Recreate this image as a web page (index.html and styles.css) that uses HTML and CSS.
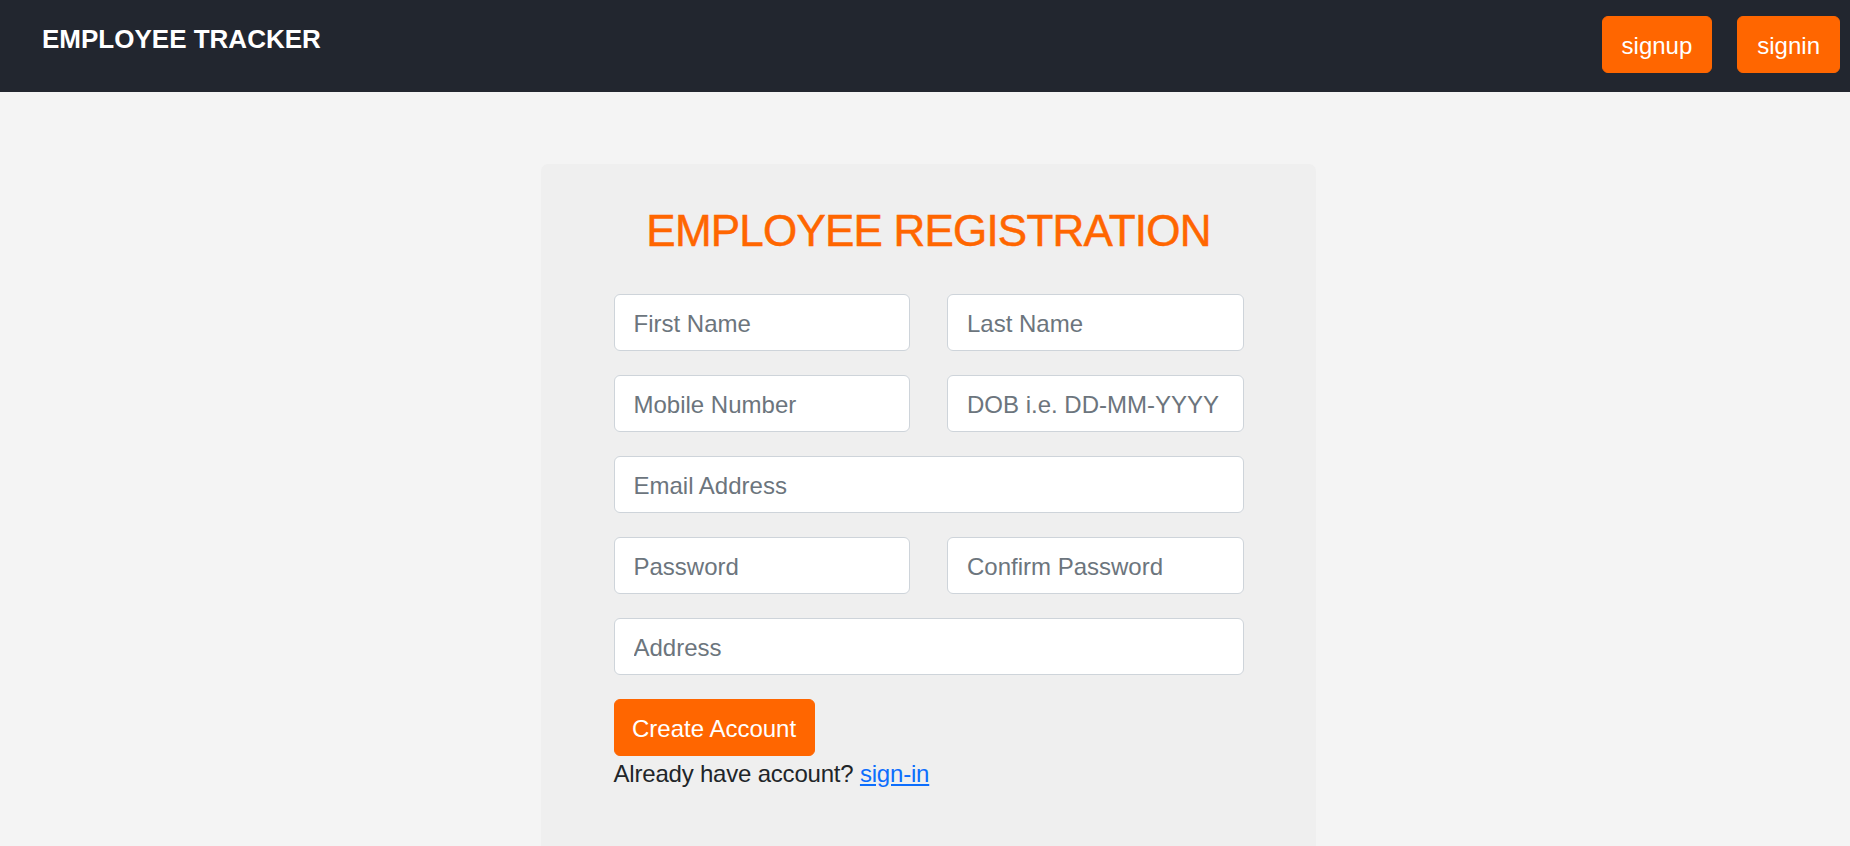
FILE: index.html
```html
<!DOCTYPE html>
<html lang="en">
<head>
<meta charset="utf-8">
<title>Employee Tracker</title>
<link rel="stylesheet" href="styles.css">
</head>
<body>
<nav class="navbar">
  <a class="brand" href="#">EMPLOYEE TRACKER</a>
  <div class="nav-actions">
    <button class="btn" type="button">signup</button>
    <button class="btn" type="button">signin</button>
  </div>
</nav>
<main class="page">
  <section class="card">
    <h1 class="title">EMPLOYEE REGISTRATION</h1>
    <form class="form">
      <input class="field" type="text" placeholder="First Name">
      <input class="field" type="text" placeholder="Last Name">
      <input class="field" type="text" placeholder="Mobile Number">
      <input class="field" type="text" placeholder="DOB i.e. DD-MM-YYYY">
      <input class="field wide" type="email" placeholder="Email Address">
      <input class="field" type="password" placeholder="Password">
      <input class="field" type="password" placeholder="Confirm Password">
      <input class="field wide" type="text" placeholder="Address">
      <div class="wide actions">
        <button class="btn btn-submit" type="submit">Create Account</button>
        <p class="note">Already have account? <a href="#">sign-in</a></p>
      </div>
    </form>
  </section>
</main>
</body>
</html>
```

FILE: styles.css
```css
* { box-sizing: border-box; }
html, body { margin: 0; }
body {
  background: #f4f4f4;
  font-family: "Liberation Sans", Arial, sans-serif;
  color: #212529;
  font-size: 24px;
  line-height: 1.5;
  overflow: hidden;
  height: 846px;
}
.navbar {
  height: 92px;
  background: #22262f;
  display: flex;
  justify-content: space-between;
  align-items: flex-start;
  padding: 16px 10px 0 42px;
}
.brand {
  color: #fff;
  text-decoration: none;
  font-size: 26px;
  font-weight: 700;
  line-height: 36px;
  margin-top: 5px;
}
.nav-actions {
  display: flex;
  gap: 25px;
}
.btn {
  font-family: inherit;
  font-size: 24px;
  line-height: 36px;
  color: #fff;
  background: #ff6600;
  border: 1px solid #ff6600;
  border-radius: 6px;
  padding: 11px 19px 8px;
  cursor: pointer;
}
.btn-submit { padding: 11px 17.5px 8px; }
.page {
  display: flex;
  justify-content: center;
  padding: 72px 0 0 7px;
}
.card {
  width: 775px;
  min-height: 700px;
  background: #efefef;
  border-radius: 7px;
  padding: 41px 72.5px 60px;
}
.title {
  margin: 0 0 36px;
  text-align: center;
  color: #ff6600;
  font-size: 44px;
  font-weight: 400;
  line-height: 1.2;
  letter-spacing: -0.8px;
  -webkit-text-stroke: 0.5px #ff6600;
}
.form {
  display: grid;
  grid-template-columns: 1fr 1fr;
  column-gap: 37px;
  row-gap: 24px;
}
.wide { grid-column: 1 / -1; }
.field {
  height: 57px;
  width: 100%;
  font-family: inherit;
  font-size: 24px;
  color: #212529;
  background: #fff;
  border: 1px solid #ced4da;
  border-radius: 6px;
  padding: 3px 19px 0;
}
.field::placeholder { color: #6c757d; }
.actions { display: flex; flex-direction: column; align-items: flex-start; }
.note { margin: 0; line-height: 36px; letter-spacing: -0.2px; }
.note a { color: #0d6efd; }
```
